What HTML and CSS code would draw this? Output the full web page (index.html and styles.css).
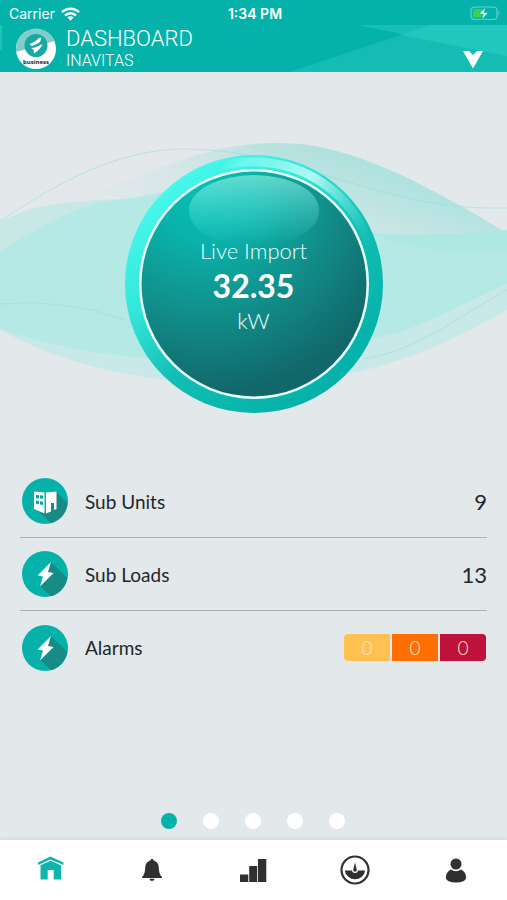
FILE: index.html
```html
<!DOCTYPE html>
<html lang="en">
<head>
<meta charset="utf-8">
<meta name="viewport" content="width=device-width, initial-scale=1">
<title>Dashboard</title>
<link rel="stylesheet" href="styles.css">
</head>
<body>
<div class="app">
  <header class="header">
    <div class="status">
      <div class="carrier">Carrier
        <svg width="19" height="14" viewBox="0 0 19 14" aria-hidden="true"><g fill="none" stroke="#fff" stroke-width="2.500"><path d="M1 5.200a12 12 0 0 1 17 0"/><path d="M4.100 8.500a7.600 7.600 0 0 1 10.800 0"/></g><path d="M6.500 10.600a4.200 4.200 0 0 1 6 0l-3 3.200z" fill="#fff"/></svg>
      </div>
      <div class="time">1:34 PM</div>
      <svg class="battery" width="31" height="15" viewBox="0 0 31 15" aria-hidden="true"><rect x="1" y="1" width="26" height="12.500" rx="3.500" fill="none" stroke="#62d0c9" stroke-width="1.200"/><path d="M28.500 5q2 2.200 0 4.500z" fill="#62d0c9"/><rect x="3" y="3" width="9" height="8.500" rx="1.500" fill="#3bd04e"/><path d="M15.500 1 9.500 8h3.800l-1.500 6 6.200-7.500h-4z" fill="#fff" stroke="#04b2aa" stroke-width=".6"/></svg>
    </div>
    <div class="titlebar">
      <svg class="facets" viewBox="0 0 507 47" preserveAspectRatio="none" aria-hidden="true"><path d="M290 47 430 0H507V47z" fill="#14bcb3"/><path d="M358 0H507V31z" fill="#18bfb6"/><path d="M401 10 430 0H507V31z" fill="#21c6bd"/><path d="M0 0h2v25H0z" fill="#21c0b8"/></svg>
      <svg class="logo" width="42" height="42" viewBox="0 0 42 42" role="img" aria-label="Inavitas business"><circle cx="21" cy="21" r="20" fill="#fff"/><path d="M1.300 24A20 20 0 0 1 39.500 13z" fill="#80cdca"/><circle cx="21" cy="17.500" r="11.500" fill="#17aaa4"/><path d="M14.500 16c3-1 7-3 9.500-6l2.500-.5-1.500 4.500c-3 2-6 3.500-8.500 4zM16 20c4 0 7-1.500 10-3.500l1.500.5c-2.500 3.500-5 6.500-8.500 8.500l-.5-4z" fill="#fff"/><text class="logo-text" x="21" y="36">business</text></svg>
      <div class="titles">
        <h1>DASHBOARD</h1>
        <p>INAVITAS</p>
      </div>
      <button class="toggle" aria-label="Select unit"><svg width="20" height="18" viewBox="0 0 20 18"><path d="M0 0h6L10 4 14 0h6L10 17.500z" fill="#fff"/></svg></button>
    </div>
  </header>

  <main class="main">
    <section class="hero">
      <svg class="hero-art" viewBox="0 72 507 393" aria-hidden="true">
        <defs>
          <linearGradient id="ring" gradientUnits="userSpaceOnUse" x1="170" y1="185" x2="330" y2="380"><stop offset="0" stop-color="#48f8eb"/><stop offset=".3" stop-color="#34e5da"/><stop offset=".6" stop-color="#11beb4"/><stop offset="1" stop-color="#04b2a9"/></linearGradient>
          <linearGradient id="rim" gradientUnits="userSpaceOnUse" x1="225" y1="160" x2="372" y2="245"><stop offset="0" stop-color="#b5fff9" stop-opacity="0"/><stop offset=".2" stop-color="#75f6ed"/><stop offset=".5" stop-color="#aff8f2"/><stop offset="1" stop-color="#36d7cb" stop-opacity="0"/></linearGradient>
          <radialGradient id="face" gradientUnits="userSpaceOnUse" cx="205" cy="190" r="205"><stop offset="0" stop-color="#08beb4"/><stop offset=".25" stop-color="#0ab2aa"/><stop offset=".6" stop-color="#118f8b"/><stop offset="1" stop-color="#116769"/></radialGradient>
          <linearGradient id="gloss" x1="0" y1="0" x2="0" y2="1"><stop offset="0" stop-color="#b4fff1" stop-opacity=".52"/><stop offset="1" stop-color="#6ff" stop-opacity="0"/></linearGradient>
          <linearGradient id="crest" x1="0" y1="0" x2="1" y2="0"><stop offset="0" stop-color="#65cfc2" stop-opacity="0"/><stop offset=".4" stop-color="#65d4c5" stop-opacity=".38"/><stop offset="1" stop-color="#54ddd1" stop-opacity=".5"/></linearGradient>
          <linearGradient id="fade" gradientUnits="userSpaceOnUse" x1="430" y1="172" x2="412" y2="245"><stop offset="0" stop-color="#e3e8eb" stop-opacity="0"/><stop offset="1" stop-color="#dde8e9" stop-opacity=".7"/></linearGradient>
        </defs>
        <path d="M100 191C165 168 205 143 280 143C350 143 425 184 507 233V245C430 240 380 234 254 234z" fill="url(#crest)"/>
        <path d="M100 191C165 168 205 143 280 143C350 143 425 184 507 233L370 236H200z" fill="url(#fade)"/>
        <path d="M0 222C30 205 70 200 125 199L200 185V340L0 328z" fill="#c8e8e6"/>
        <path d="M0 330C60 362 120 380 254 388C370 380 445 346 507 310V275L254 340z" fill="#c9e9e8"/>
        <path d="M0 251C45 225 75 205 115 200Q150 198 190 185L380 234Q445 238 507 230V284C460 304 420 330 375 338Q300 362 220 362C130 360 60 350 0 329z" fill="#b5e9e6"/>
        <path d="M370 233Q445 238 507 230V250Q440 260 370 233z" fill="#a9e7e2" opacity=".7"/>
        <g fill="none" stroke="#91ddd6" stroke-opacity=".55"><path d="M0 221C60 181 120 149 185 149C300 149 380 212 507 208"/><path d="M0 304Q65 298 125 320"/><path d="M364 359C420 350 465 312 507 290"/></g>
        <circle cx="254" cy="284" r="129" fill="url(#ring)"/>
        <path d="M205 172A122 122 0 0 1 376 284" fill="none" stroke="url(#rim)" stroke-width="9"/>
        <circle cx="254" cy="284" r="115" fill="#e8ffff"/>
        <circle cx="254" cy="284" r="112.500" fill="url(#face)"/>
        <rect x="189" y="175" width="130" height="71" rx="65" ry="35" fill="url(#gloss)"/>
      </svg>
      <div class="reading">
        <span>Live Import</span>
        <strong>32.35</strong>
        <span>kW</span>
      </div>
    </section>

    <ul class="list">
      <li class="row">
        <svg class="badge" viewBox="0 0 46 46" aria-hidden="true"><circle cx="23" cy="23" r="23" fill="#04b2aa"/><path d="M34 13.500 45.500 25A23 23 0 0 1 29 45.200L12 29 23 34z" fill="#178b85"/><path d="M12 13.500 22.500 14.500v21L12 31zM24 14.500l10.500-1V31l-2.500 1v-7h-3v8.500L24 35.500z" fill="#fff"/><path d="M14 17l3 .2v3.300l-3-.3zM18 17.300l3 .2v3.300l-3-.3zM14 22.500l3 .5v3.300l-3-.6zM18 23.200l3 .5V27l-3-.6z" fill="#04a69f"/></svg>
        <span class="label">Sub Units</span><span class="value">9</span>
      </li>
      <li class="row">
        <svg class="badge" viewBox="0 0 46 46" aria-hidden="true"><circle cx="23" cy="23" r="23" fill="#04b2aa"/><path d="M29 11 45.300 27A23 23 0 0 1 29 45.200L18 35z" fill="#178b85"/><path d="M29 11 15.500 24.500l5.500 1L18 35.500 31.500 22l-5.500-1z" fill="#fff"/></svg>
        <span class="label">Sub Loads</span><span class="value">13</span>
      </li>
      <li class="row">
        <svg class="badge" viewBox="0 0 46 46" aria-hidden="true"><circle cx="23" cy="23" r="23" fill="#04b2aa"/><path d="M29 11 45.300 27A23 23 0 0 1 29 45.200L18 35z" fill="#178b85"/><path d="M29 11 15.500 24.500l5.500 1L18 35.500 31.500 22l-5.500-1z" fill="#fff"/></svg>
        <span class="label">Alarms</span>
        <span class="alarms"><span class="low">0</span><span class="medium">0</span><span class="high">0</span></span>
      </li>
    </ul>

    <div class="dots">
      <button class="dot active" aria-label="Page 1"></button>
      <button class="dot" aria-label="Page 2"></button>
      <button class="dot" aria-label="Page 3"></button>
      <button class="dot" aria-label="Page 4"></button>
      <button class="dot" aria-label="Page 5"></button>
    </div>
  </main>

  <nav class="nav">
    <a class="current" href="#home" aria-label="Home"><svg width="30" height="30" viewBox="0 0 30 30"><path d="M2 7.500 14.500 1.500 27.500 7.500V10L14.500 4.500 2 10z" fill="currentColor"/><path d="M4.500 10.300 14.500 5.800 25 10.300V24.500h-7.300V15h-6v9.500H4.500z" fill="currentColor"/></svg></a>
    <a href="#alarms" aria-label="Alarms"><svg width="30" height="30" viewBox="0 0 30 30"><path d="M15 4c1 0 1.500.6 1.500 1.400 3.500.9 5.200 3.600 5.300 7 .1 4.600.8 7 3.200 9.600v1H5v-1c2.400-2.600 3.100-5 3.200-9.600.1-3.400 1.800-6.100 5.300-7C13.500 4.600 14 4 15 4zM12.500 23.800h5c-.3 3-4.700 3-5 0z" fill="currentColor"/></svg></a>
    <a href="#reports" aria-label="Reports"><svg width="30" height="30" viewBox="0 0 30 30"><path d="M2 19.500h8.300V27H2zM11.200 11h8v16h-8zM20 4h8.300v23H20z" fill="currentColor"/></svg></a>
    <a href="#meters" aria-label="Meters"><svg width="30" height="30" viewBox="0 0 30 30"><circle cx="15" cy="15" r="13.500" fill="none" stroke="currentColor" stroke-width="2.200"/><path d="M4.800 15.500h20.400a10.300 10.300 0 0 1-20.400 0z" fill="currentColor"/><path d="M12 15a3 3 0 1 0 6 0z" fill="#fff"/><path d="M15 7.500l1.800 7.500a1.800 1.800 0 1 1-3.600 0z" fill="currentColor"/></svg></a>
    <a href="#profile" aria-label="Profile"><svg width="30" height="30" viewBox="0 0 30 30"><circle cx="15" cy="9" r="5.500" fill="currentColor"/><path d="M10 14.500q5 3.500 10 0c3.500 1.500 5.300 5 5 9q-1.500 4-10 4t-10-4c-.3-4 1.500-7.500 5-9z" fill="currentColor"/></svg></a>
  </nav>
</div>
</body>
</html>
```

FILE: styles.css
```css
* {
  box-sizing: border-box;
}

body {
  margin: 0;
  background: #e3e8eb;
  color: #222729;
  font-family: Lato, "Open Sans", sans-serif;
}

button {
  padding: 0;
  border: 0;
  background: none;
}

svg {
  display: block;
}

.app {
  display: flex;
  flex-direction: column;
  min-height: 100vh;
}

.header {
  background: #04b2aa;
  color: #fff;
}

.status {
  display: grid;
  grid-template-columns: 1fr auto 1fr;
  align-items: center;
  height: 25px;
  padding: 2px 6px 0 9px;
  font: 400 14px/20px Inter, sans-serif;
}

.carrier {
  display: flex;
  align-items: center;
  gap: 6px;
}

.time {
  font-weight: 600;
}

.battery {
  justify-self: end;
}

.titlebar {
  display: flex;
  position: relative;
  height: 47px;
  padding: 0 24px 0 15px;
  gap: 9px;
}

.facets {
  position: absolute;
  inset: 0;
  width: 100%;
  height: 100%;
}

.logo {
  position: relative;
  margin-top: 3px;
}

.logo-text {
  fill: #222;
  font: 700 6px "Open Sans", sans-serif;
  text-anchor: middle;
}

.titles {
  position: relative;
  flex: 1;
  font-family: Roboto, sans-serif;
}

.titles h1 {
  margin: 0;
  font-size: 22px;
  font-weight: 300;
  line-height: 27px;
}

.titles p {
  margin: 0;
  font-size: 16px;
  font-weight: 300;
  line-height: 18px;
}

.toggle {
  position: relative;
  align-self: flex-end;
  margin-bottom: 3px;
}

.main {
  display: flex;
  flex: 1;
  flex-direction: column;
}

.hero {
  display: grid;
}

.hero-art {
  grid-area: 1 / 1;
  width: 100%;
}

.reading {
  display: flex;
  z-index: 1;
  grid-area: 1 / 1;
  flex-direction: column;
  align-items: center;
  justify-content: center;
  padding-top: 34px;
  color: #e9fffd;
  font-size: 22px;
  font-weight: 300;
  line-height: 32px;
}

.reading strong {
  color: #fff;
  font-size: 32px;
  font-weight: 700;
  line-height: 38px;
}

.list {
  margin: 0;
  padding: 0 20px;
  list-style: none;
}

.row {
  display: flex;
  align-items: center;
  height: 73px;
  padding: 0 0 0 2px;
  border-bottom: 1px solid #aeb3b6;
}

.row:last-child {
  border-bottom: 0;
}

.badge {
  width: 46px;
  height: 46px;
}

.label {
  flex: 1;
  margin-left: 17px;
  font-size: 19px;
}

.value {
  font-size: 22px;
}

.alarms {
  display: flex;
  gap: 2px;
  overflow: hidden;
  margin-right: 1px;
  border-radius: 4px;
  color: #ffe6c8;
  font-size: 19px;
  font-weight: 300;
  line-height: 27px;
  text-align: center;
}

.alarms span {
  width: 46px;
}

.alarms .low {
  background: #ffc251;
}

.alarms .medium {
  background: #ff6e00;
}

.alarms .high {
  background: #bd1239;
}

.dots {
  display: flex;
  justify-content: center;
  gap: 26px;
  margin-top: auto;
  padding: 0 2px 11px 0;
}

.dot {
  width: 16px;
  height: 16px;
  border-radius: 50%;
  background: #fff;
}

.dot.active {
  background: #04b2aa;
}

.nav {
  display: grid;
  grid-template-columns: repeat(5, 1fr);
  height: 60px;
  background: #fff;
  box-shadow: 0 -1px 5px rgba(0, 0, 0, 0.08);
}

.nav a {
  display: flex;
  align-items: center;
  justify-content: center;
  color: #303030;
}

.nav .current {
  color: #10b5ac;
}
```
